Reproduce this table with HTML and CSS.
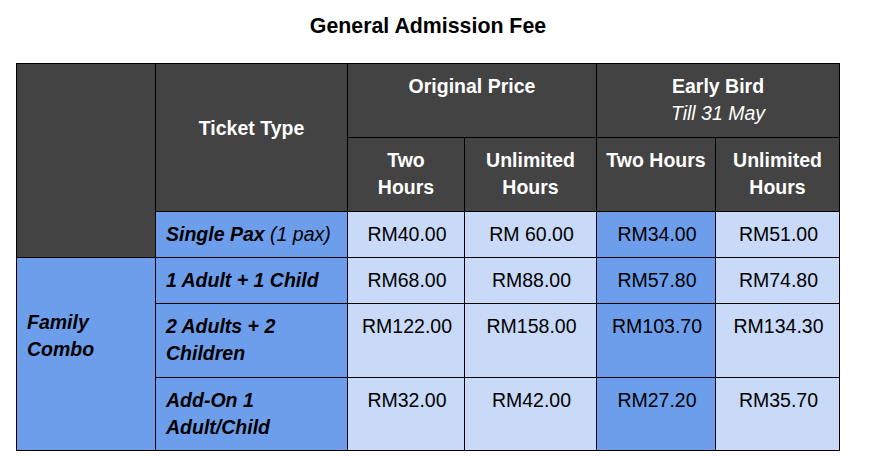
FILE: index.html
```html
<!DOCTYPE html>
<html>
<head>
<meta charset="utf-8">
<link rel="stylesheet" href="styles.css">
</head>
<body>
<div class="page">
  <h1 class="title">General Admission Fee</h1>
  <table class="fees">
    <colgroup>
      <col class="c-group">
      <col class="c-type">
      <col class="c-p1">
      <col class="c-p2">
      <col class="c-p3">
      <col class="c-p4">
    </colgroup>
    <thead>
      <tr class="r-tall">
        <th rowspan="3" class="dark"></th>
        <th rowspan="2" class="dark type-head">Ticket Type</th>
        <th colspan="2" class="dark">Original Price</th>
        <th colspan="2" class="dark">Early Bird<br><em class="sub">Till 31 May</em></th>
      </tr>
      <tr class="r-tall">
        <th class="dark">Two<br>Hours</th>
        <th class="dark">Unlimited<br>Hours</th>
        <th class="dark nowrap">Two Hours</th>
        <th class="dark">Unlimited<br>Hours</th>
      </tr>
      <tr>
        <td class="type">Single Pax <span class="light">(1 pax)</span></td>
        <td class="price">RM40.00</td>
        <td class="price">RM 60.00</td>
        <td class="price hi">RM34.00</td>
        <td class="price">RM51.00</td>
      </tr>
    </thead>
    <tbody>
      <tr>
        <td rowspan="3" class="group">Family<br>Combo</td>
        <td class="type">1 Adult + 1 Child</td>
        <td class="price">RM68.00</td>
        <td class="price">RM88.00</td>
        <td class="price hi">RM57.80</td>
        <td class="price">RM74.80</td>
      </tr>
      <tr class="r-tall">
        <td class="type">2 Adults + 2<br>Children</td>
        <td class="price">RM122.00</td>
        <td class="price">RM158.00</td>
        <td class="price hi">RM103.70</td>
        <td class="price">RM134.30</td>
      </tr>
      <tr class="r-last">
        <td class="type">Add-On 1<br>Adult/Child</td>
        <td class="price">RM32.00</td>
        <td class="price">RM42.00</td>
        <td class="price hi">RM27.20</td>
        <td class="price">RM35.70</td>
      </tr>
    </tbody>
  </table>
</div>
</body>
</html>
```

FILE: styles.css
```css
html, body {
  margin: 0;
  padding: 0;
  background: #ffffff;
}

.page {
  width: 824px;
  padding: 12px 0 0 16px;
  font-family: "Liberation Sans", Arial, sans-serif;
}

.title {
  margin: 0 0 23px 0;
  font-size: 21.33px;
  line-height: 28px;
  font-weight: bold;
  text-align: center;
  color: #000000;
}

.fees {
  width: 824px;
  table-layout: fixed;
  border-collapse: collapse;
  font-size: 19.5px;
  line-height: 27px;
  color: #000000;
}

.c-group { width: 139px; }
.c-type { width: 192px; }
.c-p1 { width: 117px; }
.c-p2 { width: 132px; }
.c-p3 { width: 119px; }
.c-p4 { width: 124px; }

.fees th,
.fees td {
  border: 1px solid #000000;
  padding: 9px 8px 9px 10px;
  vertical-align: top;
}

.r-tall { height: 74px; }
.r-last { height: 73px; }

.fees th {
  font-weight: bold;
  text-align: center;
  padding-left: 8px;
  padding-right: 8px;
}

.dark {
  background: #434343;
  color: #ffffff;
}

.sub {
  font-weight: normal;
  font-style: italic;
}

.nowrap { white-space: nowrap; }

.type-head {
  vertical-align: middle !important;
  padding-bottom: 28px !important;
}

.type {
  background: #6d9eeb;
  font-weight: bold;
  font-style: italic;
  text-align: left;
}

.type .light { font-weight: normal; }

.group {
  background: #6d9eeb;
  font-weight: bold;
  font-style: italic;
  padding-top: 51px !important;
}

.price {
  background: #c9daf8;
  text-align: center;
}

.price.hi { background: #6d9eeb; }
```
